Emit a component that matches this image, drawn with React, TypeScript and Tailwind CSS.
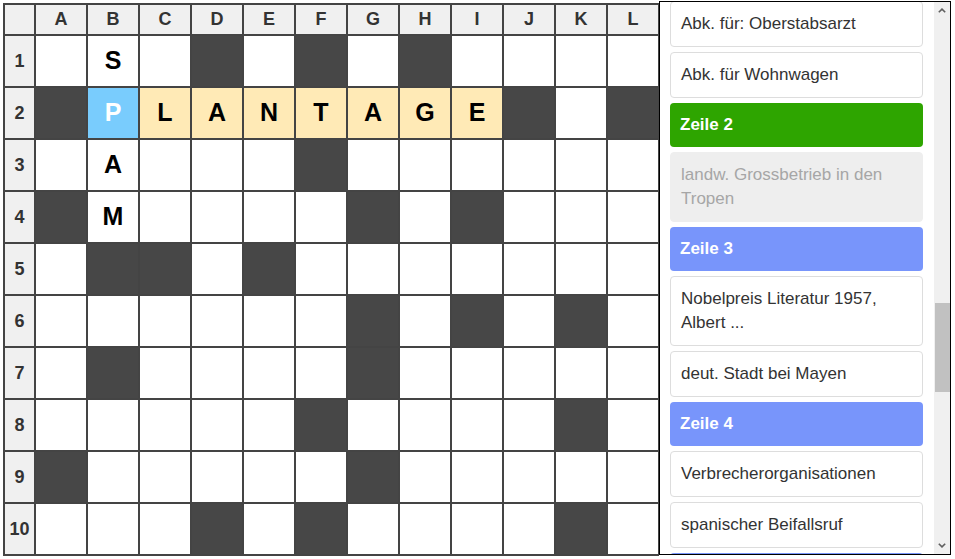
import React from "react";

const COLS = ["A", "B", "C", "D", "E", "F", "G", "H", "I", "J", "K", "L"];

// '#' = black square, '.' = empty, letters = filled in
const ROWS = [
  ".S.#.#.#....",
  "#PLANTAGE#.#",
  ".A...#......",
  "#M....#.#...",
  ".##.#.......",
  "......#.#.#.",
  ".#....#.....",
  ".....#....#.",
  "#.....#.....",
  "...#.#....#.",
];

// active word: row 2, B..I
const isWord = (r: number, c: number) => r === 1 && c >= 1 && c <= 8;
const isCursor = (r: number, c: number) => r === 1 && c === 1;

type Clue = { kind: "clue" | "head" | "active"; text: string; color?: string };

const CLUES: Clue[] = [
  { kind: "clue", text: "Abk. für: Oberstabsarzt" },
  { kind: "clue", text: "Abk. für Wohnwagen" },
  { kind: "head", text: "Zeile 2", color: "bg-[#2ea500]" },
  { kind: "active", text: "landw. Grossbetrieb in den Tropen" },
  { kind: "head", text: "Zeile 3", color: "bg-[#7895fb]" },
  { kind: "clue", text: "Nobelpreis Literatur 1957, Albert ..." },
  { kind: "clue", text: "deut. Stadt bei Mayen" },
  { kind: "head", text: "Zeile 4", color: "bg-[#7895fb]" },
  { kind: "clue", text: "Verbrecherorganisationen" },
  { kind: "clue", text: "spanischer Beifallsruf" },
  { kind: "head", text: "Zeile 5", color: "bg-[#7895fb]" },
];

function Cell({ ch, r, c }: { ch: string; r: number; c: number }) {
  if (ch === "#") return <div className="bg-[#474747]" />;
  let bg = "bg-white";
  let fg = "text-black";
  if (isCursor(r, c)) {
    bg = "bg-[#79ccfd]";
    fg = "text-white";
  } else if (isWord(r, c)) {
    bg = "bg-[#ffeab6]";
  }
  return (
    <div className={`flex items-center justify-center text-[25px] font-bold ${bg} ${fg}`}>
      {ch === "." ? "" : ch}
    </div>
  );
}

function Chevron({ up }: { up?: boolean }) {
  return (
    <svg width="8" height="5" viewBox="0 0 8 5" className={up ? "" : "rotate-180"}>
      <polyline points="0.8,4.3 4,1.1 7.2,4.3" fill="none" stroke="#606060" strokeWidth="1.6" />
    </svg>
  );
}

export default function App() {
  return (
    <div className="flex h-[559px] w-[955px] overflow-hidden bg-white font-['Liberation_Sans',Arial,sans-serif]">
      {/* board */}
      <div className="ml-[3px] mt-[3px] grid grid-cols-[29px_repeat(12,50px)] grid-rows-[29px_repeat(10,50px)] gap-[2px] self-start bg-[#444] p-[2px] pr-px">
        <div className="bg-[#f0f0f0]" />
        {COLS.map((c) => (
          <div key={c} className="flex items-center justify-center bg-[#f0f0f0] text-[18px] font-bold text-[#333]">
            {c}
          </div>
        ))}
        {ROWS.map((row, r) => (
          <React.Fragment key={r}>
            <div className="flex items-center justify-center bg-[#f0f0f0] text-[18px] font-bold text-[#333]">
              {r + 1}
            </div>
            {row.split("").map((ch, c) => (
              <Cell key={c} ch={ch} r={r} c={c} />
            ))}
          </React.Fragment>
        ))}
      </div>

      {/* clue list */}
      <div className="mt-px flex h-[554px] w-[292px] border border-black">
        <div className="flex-1 overflow-hidden pl-[10px] pr-[11px]">
          <div className="-mt-px flex flex-col gap-[5px]">
            {CLUES.map((cl, i) =>
              cl.kind === "head" ? (
                <div key={i} className={`rounded-[4px] px-[10px] py-[10px] text-[17px] leading-[24px] font-bold text-white ${cl.color}`}>
                  {cl.text}
                </div>
              ) : cl.kind === "active" ? (
                <div key={i} className="rounded-[4px] border border-[#eeeeee] bg-[#eeeeee] px-[10px] py-[10px] text-[17px] leading-[24px] text-[#a6a6a6]">
                  {cl.text}
                </div>
              ) : (
                <div key={i} className="rounded-[4px] border border-[#dddddd] bg-white px-[10px] py-[10px] text-[17px] leading-[24px] text-[#333]">
                  {cl.text}
                </div>
              )
            )}
          </div>
        </div>
        <div className="flex w-[16px] flex-col bg-[#f0f0f0]">
          <div className="flex h-[17px] items-center justify-center">
            <Chevron up />
          </div>
          <div className="mx-auto mt-[284px] h-[89px] w-[15px] bg-[#c1c1c1]" />
          <div className="flex-1" />
          <div className="flex h-[17px] items-center justify-center">
            <Chevron />
          </div>
        </div>
      </div>
    </div>
  );
}
